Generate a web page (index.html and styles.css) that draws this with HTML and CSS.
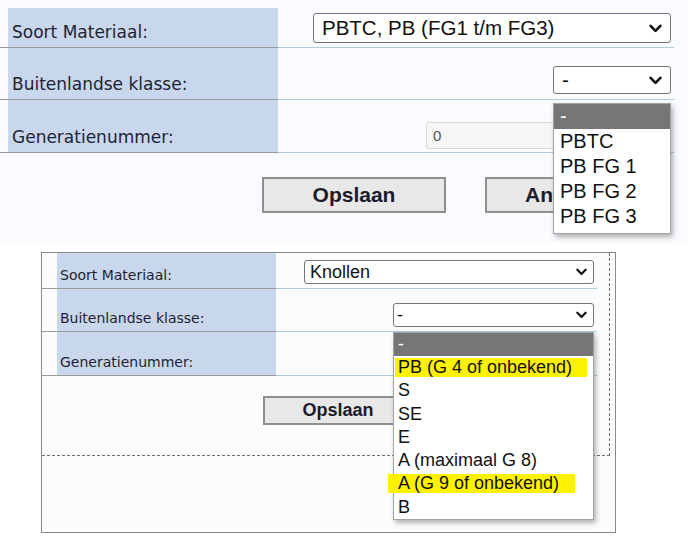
FILE: index.html
```html
<!DOCTYPE html>
<html lang="nl">
<head>
<meta charset="utf-8">
<title>Soort Materiaal</title>
<link rel="stylesheet" href="styles.css">
</head>
<body>
<section class="shot-top">
  <div class="form form-top">
    <div class="row row-1">
      <div class="gutter"></div>
      <div class="label">Soort Materiaal:</div>
      <div class="value">
        <div class="select sel-materiaal"><span class="select-text">PBTC, PB (FG1 t/m FG3)</span><svg class="chevron" viewBox="0 0 12 8"><polyline points="1.5,1.5 6,6.2 10.5,1.5"/></svg></div>
      </div>
    </div>
    <div class="row row-2">
      <div class="gutter"></div>
      <div class="label">Buitenlandse klasse:</div>
      <div class="value">
        <div class="select sel-klasse"><span class="select-text">-</span><svg class="chevron" viewBox="0 0 12 8"><polyline points="1.5,1.5 6,6.2 10.5,1.5"/></svg></div>
      </div>
    </div>
    <div class="row row-3">
      <div class="gutter"></div>
      <div class="label">Generatienummer:</div>
      <div class="value">
        <div class="input">0</div>
      </div>
    </div>
  </div>
  <div class="buttons">
    <button class="btn">Opslaan</button>
    <button class="btn">Annuleren</button>
  </div>
  <ul class="dropdown">
    <li class="opt opt-selected">-</li>
    <li class="opt">PBTC</li>
    <li class="opt">PB FG 1</li>
    <li class="opt">PB FG 2</li>
    <li class="opt">PB FG 3</li>
  </ul>
</section>

<section class="shot-bottom">
  <div class="frame">
    <div class="panel">
      <div class="form form-bottom">
        <div class="row row-1">
          <div class="gutter"></div>
          <div class="label">Soort Materiaal:</div>
          <div class="value">
            <div class="select sel-materiaal"><span class="select-text">Knollen</span><svg class="chevron" viewBox="0 0 12 8"><polyline points="1.5,1.5 6,6.2 10.5,1.5"/></svg></div>
          </div>
        </div>
        <div class="row row-2">
          <div class="gutter"></div>
          <div class="label">Buitenlandse klasse:</div>
          <div class="value">
            <div class="select sel-klasse"><span class="select-text">-</span><svg class="chevron" viewBox="0 0 12 8"><polyline points="1.5,1.5 6,6.2 10.5,1.5"/></svg></div>
          </div>
        </div>
        <div class="row row-3">
          <div class="gutter"></div>
          <div class="label">Generatienummer:</div>
          <div class="value">
            <div class="input"></div>
          </div>
        </div>
      </div>
      <div class="buttons">
        <button class="btn">Opslaan</button>
        <button class="btn btn-hidden">Annuleren</button>
      </div>
    </div>
    <ul class="dropdown">
      <li class="opt opt-selected">-</li>
      <li class="opt"><span class="mark mark-pb">PB (G 4 of onbekend)</span></li>
      <li class="opt">S</li>
      <li class="opt">SE</li>
      <li class="opt">E</li>
      <li class="opt">A (maximaal G 8)</li>
      <li class="opt"><span class="mark mark-a">A (G 9 of onbekend)</span></li>
      <li class="opt">B</li>
    </ul>
  </div>
</section>
</body>
</html>
```

FILE: styles.css
```css
* { box-sizing: border-box; }

html, body { margin: 0; padding: 0; }

body {
  width: 688px;
  height: 537px;
  overflow: hidden;
  background: #ffffff;
  font-family: "Liberation Sans", Arial, sans-serif;
  color: #111111;
}

/* ---------- shared form pieces ---------- */
.row { display: grid; }

.gutter,
.label { border-bottom: 1px solid #9a9a9a; }

.label {
  display: flex;
  align-items: flex-end;
  background: #c8d7ec;
  font-family: "DejaVu Sans", Verdana, sans-serif;
  color: #1f1f33;
  white-space: nowrap;
}

.value {
  display: flex;
  justify-content: flex-end;
  align-items: flex-end;
  border-bottom: 1px solid #a9cfdc;
  padding-right: 3px;
  padding-bottom: 4px;
}

.select {
  display: flex;
  align-items: center;
  justify-content: space-between;
  background: #ffffff;
  border: 1px solid #767676;
  border-radius: 3px;
  color: #111111;
  white-space: nowrap;
}

.chevron {
  fill: none;
  stroke: #111111;
  stroke-width: 2.4;
  stroke-linecap: round;
  stroke-linejoin: round;
}

.input {
  background: #f6f6f6;
  border: 1px solid #d9d9d9;
  border-radius: 2px;
  color: #555555;
  display: flex;
  align-items: center;
}

.buttons { display: flex; }

.btn {
  font-family: "Liberation Sans", Arial, sans-serif;
  font-weight: bold;
  color: #1b1b2b;
  background: #e8e8e8;
  border: 2px solid #8e8e8e;
  padding: 0;
  margin: 0;
}

.dropdown {
  position: absolute;
  margin: 0;
  padding: 0;
  list-style: none;
  background: #ffffff;
  border: 1px solid #a3a3a3;
  box-shadow: 2px 3px 5px rgba(0, 0, 0, 0.3);
  color: #111111;
}

.opt { white-space: nowrap; }

.opt-selected {
  background: #767676;
  color: #ffffff;
}

/* ---------- top screenshot ---------- */
.shot-top {
  position: relative;
  height: 243px;
  background: #fafbfe;
  padding-top: 8px;
}

.form-top { width: 674px; }
.form-top .row { grid-template-columns: 8px 270px 1fr; }
.form-top .row-1 { height: 40px; }
.form-top .row-2 { height: 52px; }
.form-top .row-3 { height: 53px; }

.form-top .label {
  font-size: 17px;
  padding: 0 0 5px 4px;
}

.form-top .select { font-size: 20.5px; padding: 0 8px 0 8px; }
.form-top .sel-materiaal { width: 358px; height: 30px; }
.form-top .sel-klasse { width: 118px; height: 28px; margin-bottom: 1px; }
.form-top .chevron { width: 13px; height: 9px; }

.form-top .input {
  width: 245px;
  height: 27px;
  font-size: 15px;
  padding-left: 6px;
  margin-bottom: -1px;
}

.shot-top .buttons {
  margin-top: 24px;
  padding-left: 262px;
  gap: 39px;
}

.shot-top .btn {
  width: 184px;
  height: 36px;
  font-size: 21px;
}

.shot-top .dropdown {
  left: 553px;
  top: 103px;
  width: 118px;
  padding-bottom: 4px;
  font-size: 20px;
}

.shot-top .opt {
  height: 25px;
  line-height: 25px;
  padding-left: 6px;
}

/* ---------- bottom screenshot ---------- */
.shot-bottom {
  padding: 9px 0 0 41px;
}

.frame {
  position: relative;
  width: 575px;
  height: 281px;
  border: 1px solid #8a8a8a;
  background: #fbfcfe;
}

.panel {
  width: 568px;
  height: 203px;
  border-right: 1px dashed #6f6f6f;
  border-bottom: 1px dashed #6f6f6f;
}

.form-bottom { width: 555px; }
.form-bottom .row { grid-template-columns: 15px 219px 1fr; }
.form-bottom .row-1 { height: 36px; }
.form-bottom .row-2 { height: 43px; }
.form-bottom .row-3 { height: 44px; }

.form-bottom .label {
  font-size: 14px;
  padding: 0 0 5px 3px;
}

.form-bottom .select { font-size: 18px; height: 24px; }
.form-bottom .sel-materiaal { width: 290px; padding: 0 6px 0 5px; }
.form-bottom .sel-klasse { width: 201px; padding: 0 6px 0 3px; }
.form-bottom .chevron { width: 11px; height: 8px; }

.form-bottom .input {
  width: 180px;
  height: 24px;
}

.shot-bottom .buttons {
  margin-top: 20px;
  padding-left: 221px;
  gap: 20px;
}

.shot-bottom .btn {
  width: 150px;
  height: 29px;
  font-size: 18px;
}

.shot-bottom .btn-hidden { width: 140px; }

.shot-bottom .dropdown {
  left: 351px;
  top: 79px;
  width: 201px;
  font-size: 18px;
}

.shot-bottom .opt {
  height: 23.3px;
  line-height: 23.3px;
  padding-left: 4px;
}

.shot-bottom .opt-selected { height: 23px; line-height: 23px; }

.mark {
  display: inline-block;
  line-height: 19px;
  background: #fff200;
}

.mark-pb {
  margin-left: -3px;
  padding: 0 15px 0 3px;
}

.mark-a {
  margin-left: -10px;
  padding: 0 16px 0 10px;
}
```
